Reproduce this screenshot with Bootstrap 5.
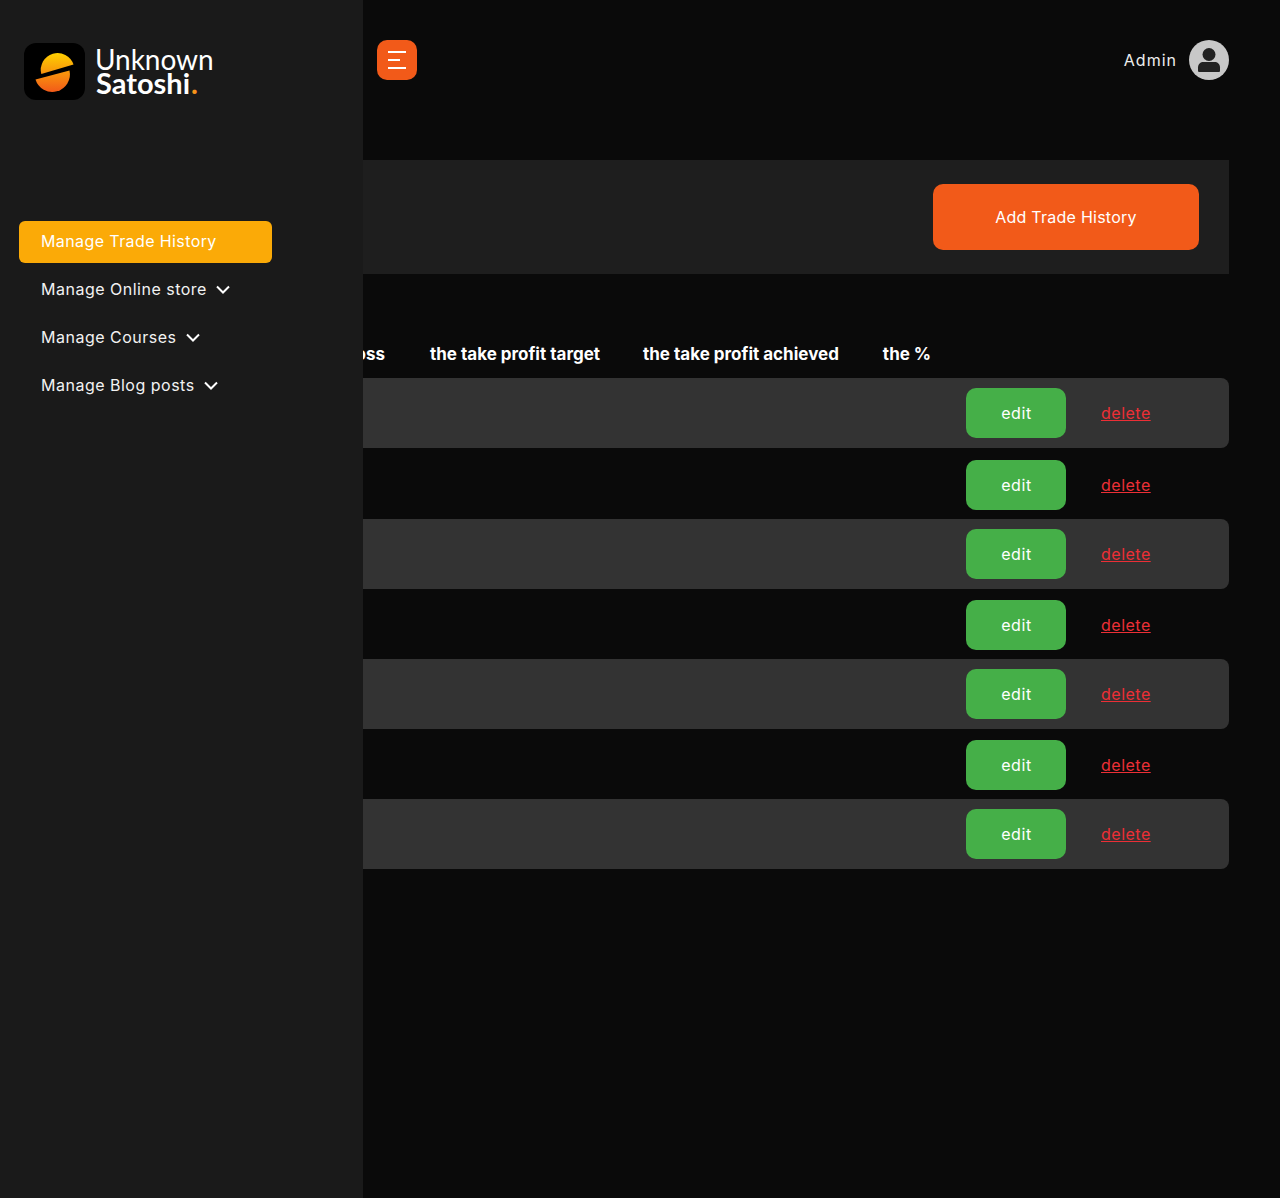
<!DOCTYPE html>
<html lang="en">
<head>
<meta charset="utf-8">
<title>Manage Trade History</title>
<link href="https://cdn.jsdelivr.net/npm/bootstrap@5.3.0/dist/css/bootstrap.min.css" rel="stylesheet">
<style>
html,body{height:100%}
body{background:#0a0a0a;color:#fff;font-family:"Inter","Noto Sans",sans-serif;overflow:hidden}
.us-shell{min-height:1198px;padding-left:363px;padding-right:51px}
.us-side{position:absolute;left:0;top:0;bottom:0;width:363px;background:#1a1a1a;padding:43px 0 0 19px;z-index:2}
.us-logo{gap:10px;margin-left:5px;height:57px}
.us-word{font-family:"Lato",sans-serif;line-height:24px;color:#fff}
.us-word1{font-size:28px;font-weight:400;margin-top:-2px;letter-spacing:-.05px}
.us-word2{font-size:29px;font-weight:700;margin-left:1px}
.us-dot{color:#f7931a;margin-left:1px}
.us-menu{margin-top:121px;width:253px;font-size:16px;gap:6px}
.us-menu a{display:flex;align-items:center;height:42px;padding:0 0 2px 22px;color:#f2f2f2;text-decoration:none;border-radius:6px;gap:9px;letter-spacing:.5px}
.us-menu a.us-on{background:#fbaa07;color:#fff;letter-spacing:.4px}
.us-top{height:160px;padding:40px 0 0 14px}
.us-burger{width:40px;height:40px;background:#f25a19;border:0;border-radius:10px;padding:0 0 0 11px;display:flex;flex-direction:column;gap:6px;align-items:flex-start;justify-content:center}
.us-burger i{display:block;height:2px;width:18px;background:#fff}
.us-burger i:nth-child(2){width:12px}
.us-admin{gap:12px;font-size:16px;color:#eee;letter-spacing:1px}
.us-ava{width:40px;height:40px;border-radius:50%;background:#c8c8c8}
.us-panel{height:114px;background:#1e1e1e;padding-right:30px}
.us-add{width:266px;height:66px;background:#f25a19;color:#fff;border:0;border-radius:10px;font-size:16px;letter-spacing:.25px}
.us-add:hover{background:#f25a19;color:#fff}
.us-head{height:104px;padding-top:70px;font-weight:700;font-size:17px;line-height:20px;white-space:nowrap}
.us-h1{width:22px}
.us-h2{margin-left:45px}
.us-h3{margin-left:43px}
.us-h4{margin-left:44px}
.us-row{height:70px;padding-left:603px;border-radius:0 8px 8px 0;align-items:flex-start;padding-top:10px}
.us-row.us-fill{background:#333}
.us-row.us-tall{height:71px;padding-top:12px}
.us-row.us-mid{padding-top:11px}
.us-edit{width:100px;height:50px;background:#45af48;color:#fff;border:0;border-radius:10px;font-size:16px;letter-spacing:.6px;padding-left:13px}
.us-edit:hover{background:#45af48;color:#fff}
.us-del{margin-left:35px;color:#ec2f36;font-size:16px;line-height:50px;letter-spacing:.5px}
</style>
</head>
<body>
<div class="us-shell position-relative">
  <aside class="us-side">
    <div class="us-logo d-flex align-items-center">
      <svg width="61" height="57" viewBox="0 0 61 57" aria-hidden="true">
        <defs><linearGradient id="lg" gradientUnits="userSpaceOnUse" x1="0" y1="10" x2="0" y2="49"><stop offset="0" stop-color="#ffd000"/><stop offset="1" stop-color="#f25a19"/></linearGradient></defs>
        <rect width="61" height="57" rx="12" fill="#000"/>
        <path fill="url(#lg)" d="M17.300 31 A16.800 16.800 0 0 1 49.500 21.500 Z"/>
        <path fill="url(#lg)" d="M11.500 36.500 L45.500 27.500 A17.600 17.600 0 0 1 11.500 36.500 Z"/>
      </svg>
      <div class="us-word">
        <div class="us-word1">Unknown</div>
        <div class="us-word2">Satoshi<span class="us-dot">.</span></div>
      </div>
    </div>
    <nav class="us-menu d-flex flex-column">
      <a href="#" class="us-on">Manage Trade History</a>
      <a href="#">Manage Online store <svg width="14" height="9" viewBox="0 0 14 9"><path d="M1 1.500l6 6 6-6" fill="none" stroke="#fff" stroke-width="2"/></svg></a>
      <a href="#">Manage Courses <svg width="14" height="9" viewBox="0 0 14 9"><path d="M1 1.500l6 6 6-6" fill="none" stroke="#fff" stroke-width="2"/></svg></a>
      <a href="#">Manage Blog posts <svg width="14" height="9" viewBox="0 0 14 9"><path d="M1 1.500l6 6 6-6" fill="none" stroke="#fff" stroke-width="2"/></svg></a>
    </nav>
  </aside>
  <header class="us-top d-flex justify-content-between align-items-start">
    <button class="us-burger" aria-label="menu"><i></i><i></i><i></i></button>
    <div class="us-admin d-flex align-items-center">
      <span>Admin</span>
      <svg class="us-ava" viewBox="0 0 40 40" aria-hidden="true"><circle cx="20" cy="14.500" r="6.500" fill="#222"/><path fill="#222" d="M9 30.500v-3c0-3.500 2.500-5.500 5.500-5.500h11c3 0 5.500 2 5.500 5.500v3c0 1-.5 1.500-1.500 1.500h-19c-1 0-1.500-.5-1.500-1.500z"/></svg>
    </div>
  </header>
  <section class="us-panel d-flex justify-content-end align-items-center">
    <button class="btn us-add">Add Trade History</button>
  </section>
  <div class="us-head d-flex">
    <span class="us-h1 d-flex justify-content-end"><span>the stop loss</span></span>
    <span class="us-h2">the take profit target</span>
    <span class="us-h3">the take profit achieved</span>
    <span class="us-h4">the %</span>
  </div>
  <div class="us-row us-fill d-flex"><button class="btn us-edit">edit</button><a href="#" class="us-del">delete</a></div>
  <div class="us-row us-tall d-flex"><button class="btn us-edit">edit</button><a href="#" class="us-del">delete</a></div>
  <div class="us-row us-fill d-flex"><button class="btn us-edit">edit</button><a href="#" class="us-del">delete</a></div>
  <div class="us-row us-mid d-flex"><button class="btn us-edit">edit</button><a href="#" class="us-del">delete</a></div>
  <div class="us-row us-fill d-flex"><button class="btn us-edit">edit</button><a href="#" class="us-del">delete</a></div>
  <div class="us-row us-mid d-flex"><button class="btn us-edit">edit</button><a href="#" class="us-del">delete</a></div>
  <div class="us-row us-fill d-flex"><button class="btn us-edit">edit</button><a href="#" class="us-del">delete</a></div>
</div>
<script src="https://cdn.jsdelivr.net/npm/bootstrap@5.3.0/dist/js/bootstrap.bundle.min.js"></script>
</body>
</html>
